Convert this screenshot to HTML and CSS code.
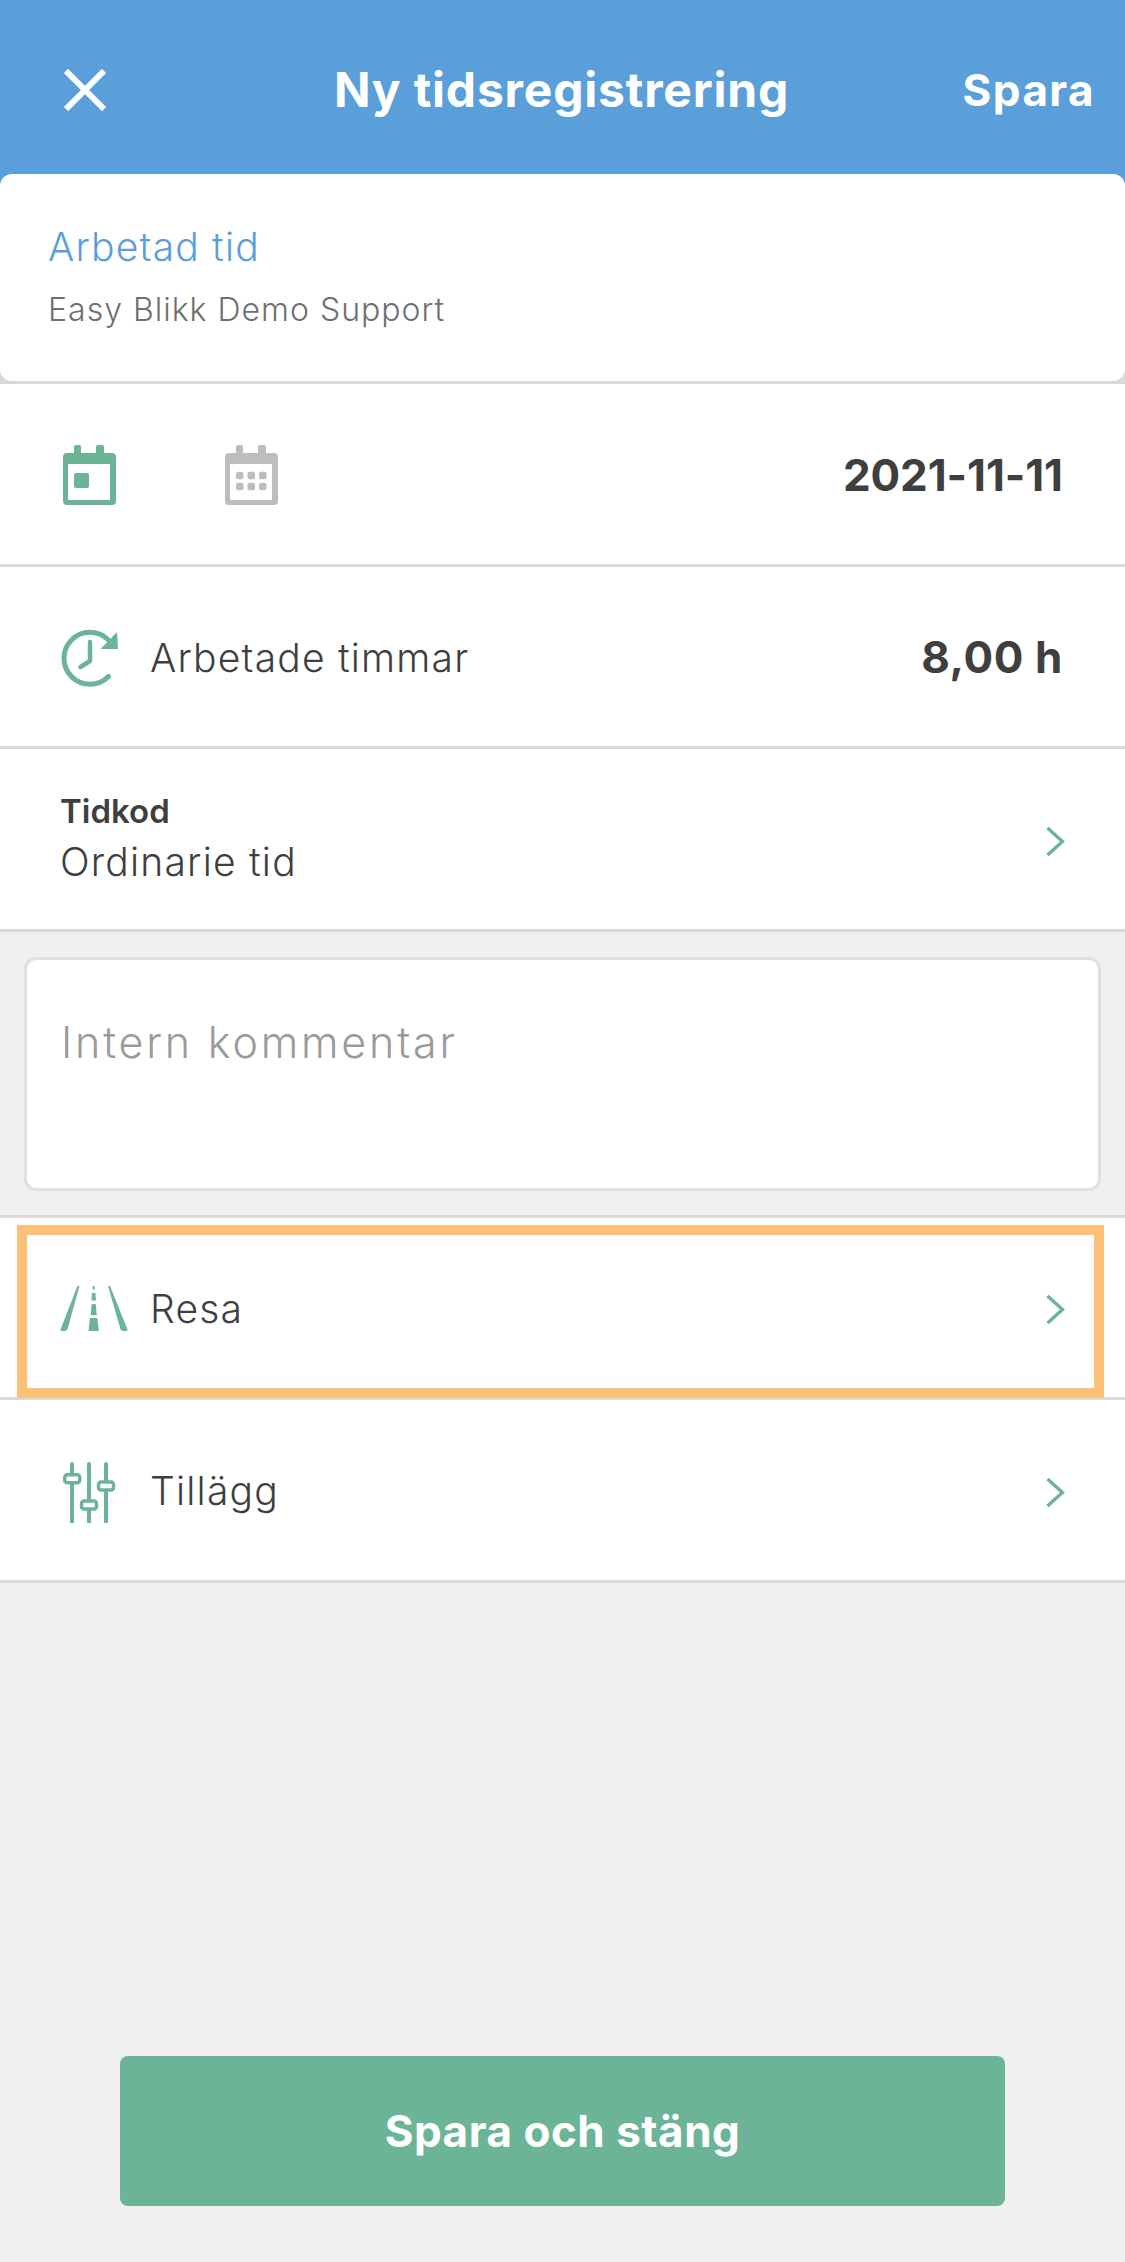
FILE: index.html
```html
<!DOCTYPE html>
<html lang="sv">
<head>
<meta charset="utf-8">
<title>Ny tidsregistrering</title>
<link rel="stylesheet" href="styles.css">
</head>
<body>
<div class="app">
  <header class="topbar">
    <svg class="close" viewBox="0 0 44 42"><path d="M3 2 41 40M41 2 3 40" fill="none" stroke="#fff" stroke-width="6"/></svg>
    <h1 class="title">Ny tidsregistrering</h1>
    <span class="save">Spara</span>
  </header>
  <div class="card-wrap">
    <section class="card">
      <div class="card-title">Arbetad tid</div>
      <div class="card-sub">Easy Blikk Demo Support</div>
    </section>
  </div>
  <div class="row">
    <div class="cals">
      <svg class="cal" viewBox="0 0 53 60"><path fill="#6cb498" fill-rule="evenodd" d="M13 0h3a2 2 0 0 1 2 2v6h15V2a2 2 0 0 1 2-2h4a2 2 0 0 1 2 2v6h8a4 4 0 0 1 4 4v44a4 4 0 0 1-4 4H4a4 4 0 0 1-4-4V12a4 4 0 0 1 4-4h7V2a2 2 0 0 1 2-2ZM5 19v35a1 1 0 0 0 1 1h40a1 1 0 0 0 1-1V19Z"/><rect x="11" y="28" width="15" height="15" rx="2" fill="#6cb498"/></svg>
      <svg class="cal" viewBox="0 0 53 60"><path fill="#bdbdbd" fill-rule="evenodd" d="M13 0h3a2 2 0 0 1 2 2v6h15V2a2 2 0 0 1 2-2h4a2 2 0 0 1 2 2v6h8a4 4 0 0 1 4 4v44a4 4 0 0 1-4 4H4a4 4 0 0 1-4-4V12a4 4 0 0 1 4-4h7V2a2 2 0 0 1 2-2ZM5 19v35a1 1 0 0 0 1 1h40a1 1 0 0 0 1-1V19Z"/><g fill="#bdbdbd"><rect x="11" y="26.700" width="7.500" height="7.500" rx="2"/><rect x="22.500" y="26.700" width="7.500" height="7.500" rx="2"/><rect x="34" y="26.700" width="7.500" height="7.500" rx="2"/><rect x="11" y="37.700" width="7.500" height="7.500" rx="2"/><rect x="22.500" y="37.700" width="7.500" height="7.500" rx="2"/><rect x="34" y="37.700" width="7.500" height="7.500" rx="2"/></g></svg>
    </div>
    <strong class="value value-date">2021-11-11</strong>
  </div>
  <div class="row">
    <div class="label-group">
      <svg class="icon" viewBox="0 0 58 58"><path d="M47.500 47.500A26 26 0 1 1 47 10.500" fill="none" stroke="#6cb498" stroke-width="5" stroke-linecap="round"/><path d="M56 3 57 20H39.500Z" fill="#6cb498"/><path d="M29 13v19l-9.500 6" fill="none" stroke="#6cb498" stroke-width="4.500" stroke-linecap="round" stroke-linejoin="round"/></svg>
      <span class="label">Arbetade timmar</span>
    </div>
    <strong class="value value-hours">8,00 h</strong>
  </div>
  <div class="row">
    <div class="stack">
      <div class="stack-title">Tidkod</div>
      <div class="label stack-value">Ordinarie tid</div>
    </div>
    <svg class="chevron" viewBox="0 0 19 31"><path d="M1.500 2 16.500 15.500 1.500 29" fill="none" stroke="#6cb498" stroke-width="3.500"/></svg>
  </div>
  <section class="comment-area">
    <div class="comment">Intern kommentar</div>
  </section>
  <div class="row row-marked">
    <div class="label-group">
      <svg class="icon icon-road" viewBox="0 0 68 45"><g fill="#6cb498"><path d="M17.500 0h2L8 41.500A4 4 0 0 1 4.500 45H1.500A1.200 1.200 0 0 1 .5 43.500Z"/><path d="M48 0h2L67.500 43.500A1.200 1.200 0 0 1 66.500 45H63.500A4 4 0 0 1 60 41.500Z"/><path d="M32.700 0h2v3.500h-2ZM32 7h3.400l.6 7.500h-4.600ZM31.500 19a1 1 0 0 1 1-1h2.400a1 1 0 0 1 1 1l.8 10.300h-6ZM30 32h7.400l1.300 11.500a1 1 0 0 1-1 1.500h-8a1 1 0 0 1-1-1.500Z"/></g></svg>
      <span class="label">Resa</span>
    </div>
    <svg class="chevron" viewBox="0 0 19 31"><path d="M1.500 2 16.500 15.500 1.500 29" fill="none" stroke="#6cb498" stroke-width="3.500"/></svg>
    <div class="marker"></div>
  </div>
  <div class="row">
    <div class="label-group">
      <svg class="icon icon-sliders" viewBox="0 0 53 61"><g stroke="#6cb498" stroke-width="4" stroke-linecap="round" fill="none"><path d="M9 2v58M26 2v58M43 2v58"/></g><g fill="#fff" stroke="#6cb498" stroke-width="3.500"><rect x="1.750" y="12.700" width="15" height="8" rx="2.500"/><rect x="18.500" y="39" width="15" height="8" rx="2.500"/><rect x="35.500" y="20" width="15" height="8" rx="2.500"/></g></svg>
      <span class="label">Tillägg</span>
    </div>
    <svg class="chevron" viewBox="0 0 19 31"><path d="M1.500 2 16.500 15.500 1.500 29" fill="none" stroke="#6cb498" stroke-width="3.500"/></svg>
  </div>
  <div class="footer">
    <button class="primary">Spara och stäng</button>
  </div>
</div>
</body>
</html>
```
FILE: styles.css
```css
* { box-sizing: border-box; }
html, body { margin: 0; padding: 0; }
body { background: #f0f0f0; font-family: "Inter", "Lato", "Liberation Sans", sans-serif; color: #3f3f3f; }
.app { width: 1125px; height: 2262px; display: flex; flex-direction: column; overflow: hidden; }

.topbar { height: 174px; background: #5a9fd9; display: grid; grid-template-columns: 1fr auto 1fr; align-items: center; padding: 6px 30px 0 28px; color: #fff; flex: none; }
.close { width: 44px; height: 42px; margin-left: 35px; }
.title { margin: 0; font-size: 48px; font-weight: 700; letter-spacing: 0.8px; line-height: 1; }
.save { justify-self: end; font-size: 44px; font-weight: 700; line-height: 1; letter-spacing: 1.4px; }

.card-wrap { height: 210px; flex: none; background: linear-gradient(#5a9fd9 50%, #d9d9d9 50%); padding-bottom: 3px; }
.card { height: 207px; background: #fff; border-radius: 12px; padding: 0 48px; display: flex; flex-direction: column; }
.card-title { color: #5a9fd9; font-size: 39px; line-height: 48px; margin-top: 49px; font-weight: 300; letter-spacing: 1.2px; }
.card-sub { color: #6f6f6f; font-size: 32px; line-height: 40px; margin-top: 19px; font-weight: 300; letter-spacing: 1px; }

.row { height: 182.5px; flex: none; background: #fff; border-bottom: 3px solid #d9d9d9; display: flex; align-items: center; justify-content: space-between; padding: 0 60px 0 61px; position: relative; }
.cals { display: flex; gap: 109px; padding: 2px 0 0 2px; }
.cal { width: 53px; height: 60px; display: block; }
.value { font-size: 44px; font-weight: 700; line-height: 1; color: #3f3f3f; margin-right: 2px; margin-top: 2px; }
.value-date { letter-spacing: -0.1px; }
.value-hours { letter-spacing: 0.6px; }
.label-group { display: flex; align-items: center; padding-top: 3px; }
.icon { width: 58px; height: 58px; margin-right: 31px; display: block; }
.icon-road { width: 68px; height: 45px; margin-left: -1px; margin-right: 22px; }
.icon-sliders { width: 53px; height: 61px; margin-left: 2px; margin-right: 34px; margin-top: 2px; }
.label { font-size: 39px; line-height: 48px; font-weight: 300; letter-spacing: 1.2px; color: #3f3f3f; }
.stack { display: flex; flex-direction: column; margin-left: -1px; }
.stack-title { font-size: 33px; font-weight: 600; line-height: 40px; color: #3f3f3f; }
.stack-value { margin-top: 7px; }
.chevron { width: 19px; height: 31px; display: block; margin-top: 5px; }

.comment-area { height: 286px; flex: none; border-bottom: 3px solid #d9d9d9; padding: 25px 24px 0; }
.comment { height: 234px; background: #fff; border: 3px solid #e0e0e0; border-radius: 12px; padding: 57px 34px 0; font-size: 43px; font-weight: 300; line-height: 50px; color: #9a9a9a; letter-spacing: 2.8px; }

.marker { position: absolute; left: 17px; right: 21px; top: 7px; bottom: -1px; border: 10px solid #fdc077; pointer-events: none; }

.footer { flex: 1; padding: 473px 0 0 0; display: flex; justify-content: center; align-items: flex-start; }
.primary { width: 885px; height: 150px; border: 0; border-radius: 8px; background: #6cb498; color: #fff; font-family: inherit; font-size: 44px; font-weight: 700; letter-spacing: 0.5px; }
```
